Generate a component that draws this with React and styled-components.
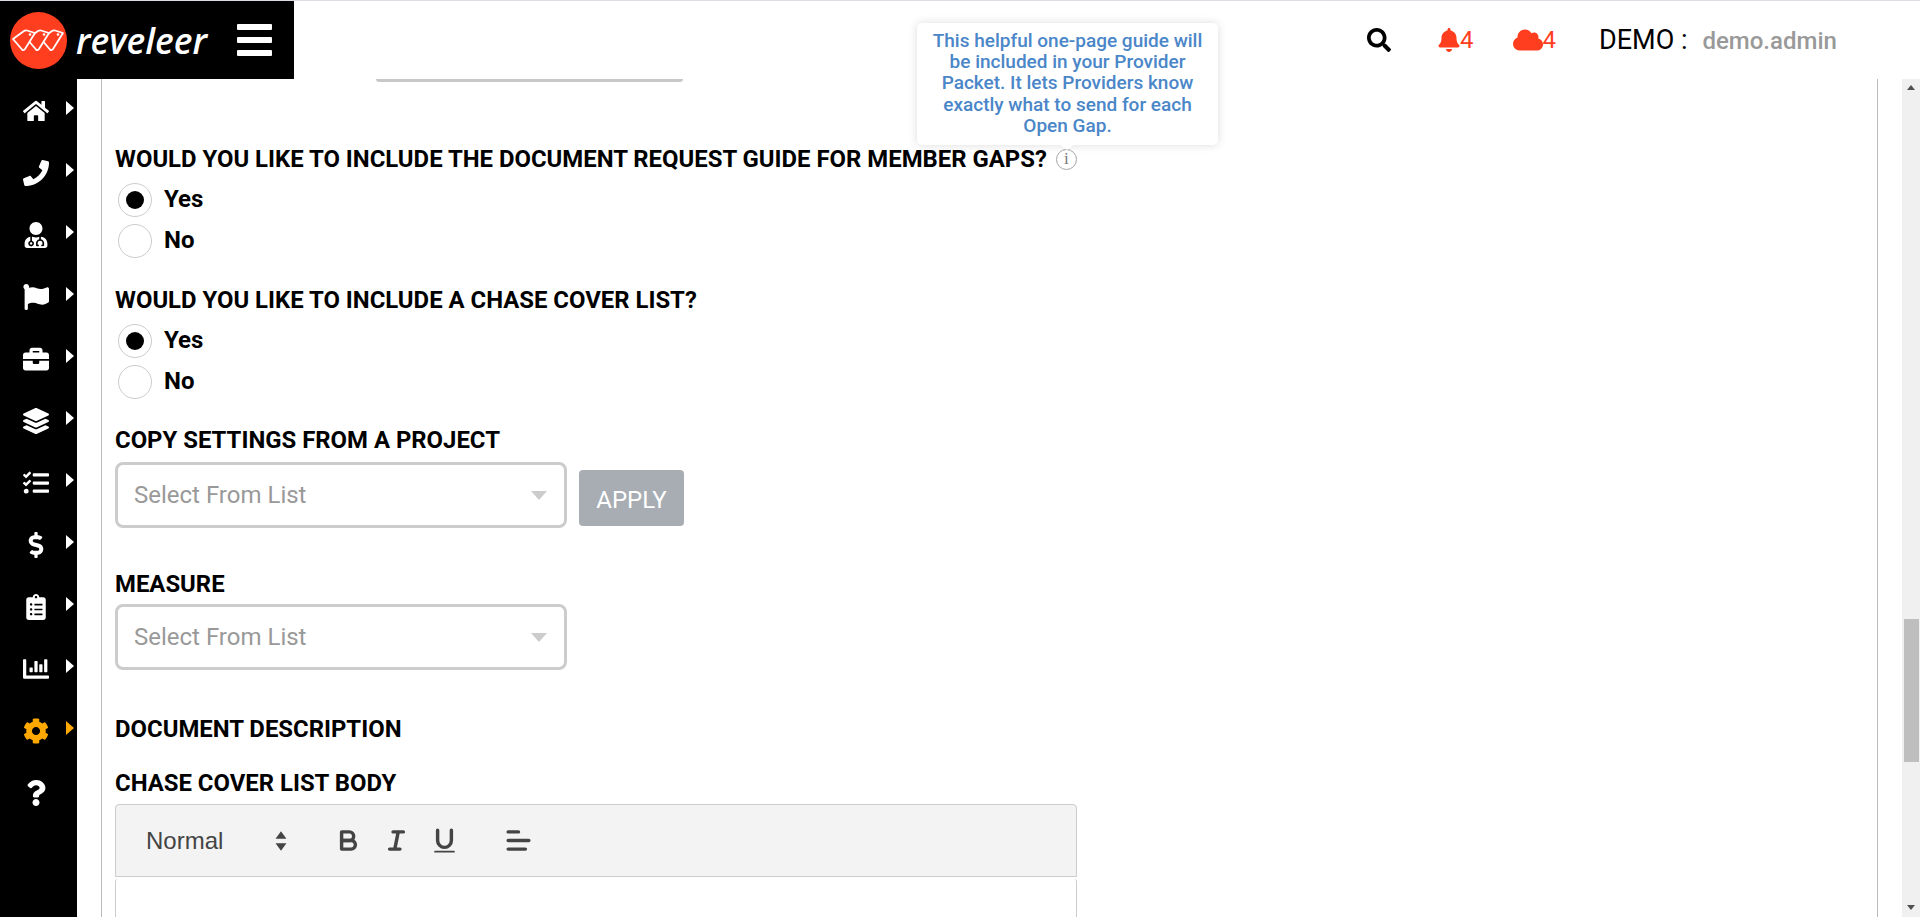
import React from "react";
import styled, { createGlobalStyle } from "styled-components";
import {
  FaHome, FaPhone, FaUserMd, FaFlag, FaBriefcase, FaLayerGroup, FaTasks,
  FaDollarSign, FaClipboardList, FaChartBar, FaCog, FaQuestion, FaSearch, FaBell, FaCloud,
} from "react-icons/fa";

const GlobalStyle = createGlobalStyle`
  html, body { margin: 0; padding: 0; height: 100%; overflow: hidden; background: #fff; }
  body { font-family: Roboto, "Liberation Sans", sans-serif; color: #000; }
`;

const Page = styled.div`
  position: relative;
  width: 1920px;
  height: 917px;
  overflow: hidden;
  display: flex;
  flex-direction: column;
  border-top: 1px solid #dcdce2;
  box-sizing: border-box;
`;

const Header = styled.header`
  display: flex;
  align-items: center;
  height: 78px;
  flex: none;
`;

const Brand = styled.div`
  width: 294px;
  height: 78px;
  background: #000;
  display: flex;
  align-items: center;
  padding-left: 10px;
  box-sizing: border-box;
  flex: none;
`;

const LogoText = styled.span`
  font-family: "Open Sans", sans-serif;
  font-style: italic;
  font-weight: 600;
  font-size: 35.5px;
  color: #fff;
  margin-left: 9px;
  width: 161px;
`;

const Burger = styled.div`
  display: flex;
  flex-direction: column;
  gap: 7px;
  width: 35px;
  span { display: block; height: 6px; background: #fff; border-radius: 1px; }
`;

const HeaderRight = styled.div`
  flex: 1;
  display: flex;
  align-items: center;
  padding-left: 1073px;
  height: 78px;
`;

const SearchIcon = styled(FaSearch)`
  width: 24px;
  height: 24px;
  margin-right: 47px;
`;

const Alert = styled.div`
  display: flex;
  align-items: center;
  color: #ff3d1f;
  font-size: 24px;
  margin-right: ${(p) => p.$gap}px;
`;

const BellIcon = styled(FaBell)`
  width: 22px;
  height: 24px;
`;

const CloudIcon = styled(FaCloud)`
  width: 30px;
  height: 30px;
`;

const User = styled.div`
  font-size: 27px;
  display: flex;
  align-items: baseline;
  white-space: nowrap;
`;

const UserName = styled.span`
  font-size: 24px;
  font-weight: 500;
  color: #999;
  margin-left: 15px;
`;

const Body = styled.div`
  flex: 1;
  display: flex;
  min-height: 0;
`;

const Sidebar = styled.nav`
  width: 77px;
  flex: none;
  background: #000;
  padding-top: 1px;
`;

const NavItem = styled.div`
  height: 62px;
  display: flex;
  align-items: center;
  color: ${(p) => (p.$active ? "#ffa800" : "#fff")};
  svg { width: 26px; height: 26px; }
`;

const NavIcon = styled.div`
  width: 66px;
  display: flex;
  justify-content: center;
  padding-left: 6px;
  box-sizing: border-box;
`;

const NavCaret = styled.div`
  width: 0;
  height: 0;
  border-left: 8px solid currentColor;
  border-top: 7px solid transparent;
  border-bottom: 7px solid transparent;
  margin-top: -6px;
`;

const Main = styled.main`
  flex: 1;
  padding: 0 24px;
  min-width: 0;
`;

const Panel = styled.div`
  height: 100%;
  border-left: 1px solid #bbb;
  border-right: 1px solid #bbb;
  padding-left: 13px;
  overflow: hidden;
`;

const ClippedInput = styled.div`
  width: 307px;
  height: 3px;
  margin-left: 261px;
  background: #c8c8c8;
  border-radius: 0 0 6px 6px;
`;

const Question = styled.div`
  font-size: 23.9px;
  font-weight: 700;
  line-height: 24px;
  display: flex;
  align-items: center;
  white-space: nowrap;
`;

const FirstQuestion = styled(Question)`
  margin-top: 65px;
`;

const RadioGroup = styled.div`
  display: flex;
  flex-direction: column;
  gap: 7px;
  margin: 12px 0 0 3px;
`;

const RadioRow = styled.label`
  display: flex;
  align-items: center;
  height: 34px;
  font-size: 24px;
  font-weight: 700;
`;

const RadioCircle = styled.span`
  width: 34px;
  height: 34px;
  border: 1px solid #ccc;
  border-radius: 50%;
  box-sizing: border-box;
  display: flex;
  align-items: center;
  justify-content: center;
  margin-right: 12px;
  &::after {
    content: "";
    display: ${(p) => (p.$checked ? "block" : "none")};
    width: 18px;
    height: 18px;
    border-radius: 50%;
    background: #000;
  }
`;

const RadioText = styled.span`
  margin-top: -3px;
`;

const Section = styled.div`
  margin-top: ${(p) => p.$top}px;
`;

const FieldRow = styled.div`
  display: flex;
  align-items: flex-start;
  margin-top: ${(p) => p.$top}px;
`;

const Select = styled.div`
  width: 452px;
  height: 66px;
  border: 3px solid #ccc;
  border-radius: 8px;
  box-sizing: border-box;
  display: flex;
  align-items: center;
  justify-content: space-between;
  padding: 0 17px 0 16px;
  font-size: 24px;
  color: #999;
`;

const SelectCaret = styled.span`
  width: 0;
  height: 0;
  border-top: 9px solid #ccc;
  border-left: 8px solid transparent;
  border-right: 8px solid transparent;
`;

const ApplyButton = styled.button`
  width: 105px;
  height: 56px;
  margin: 8px 0 0 12px;
  border: 0;
  border-radius: 4px;
  background: #a7adb2;
  color: #fff;
  font-family: Roboto, sans-serif;
  font-size: 24px;
  padding: 4px 0 0;
`;

const Toolbar = styled.div`
  width: 962px;
  height: 73px;
  margin-top: 9px;
  box-sizing: border-box;
  background: #f3f3f3;
  border: 1px solid #ccc;
  border-radius: 4px 4px 0 0;
  display: flex;
  align-items: center;
  padding-left: 30px;
  color: #444;
`;

const FormatLabel = styled.span`
  font-family: "Liberation Sans", Arial, sans-serif;
  font-size: 24px;
  width: 127px;
  color: #444;
`;

const FormatArrows = styled.svg`
  width: 16px;
  height: 24px;
  margin-right: 44px;
`;

const ToolButton = styled.svg`
  width: 31px;
  height: 31px;
  margin-right: ${(p) => p.$gap}px;
  fill: none;
  stroke: #444;
  stroke-width: 2;
  stroke-linecap: round;
  stroke-linejoin: round;
`;

const Editor = styled.div`
  width: 962px;
  height: 60px;
  margin-top: 2px;
  box-sizing: border-box;
  border: solid #ccc;
  border-width: 0 1px;
  border-radius: 3px 3px 0 0;
`;

const Scrollbar = styled.div`
  width: 18px;
  flex: none;
  background: #f0f0f0;
  display: flex;
  flex-direction: column;
  align-items: center;
`;

const ScrollArrow = styled.span`
  width: 0;
  height: 0;
  margin-top: ${(p) => p.$top}px;
  border-left: 4.5px solid transparent;
  border-right: 4.5px solid transparent;
  ${(p) => (p.$up ? "border-bottom: 5px solid #505050;" : "border-top: 5px solid #505050;")}
`;

const ScrollThumb = styled.div`
  width: 15px;
  height: 143px;
  background: #bebebe;
  margin-top: 529px;
  align-self: flex-end;
  margin-right: 1px;
`;

const Tooltip = styled.div`
  position: absolute;
  left: 917px;
  top: 22px;
  width: 301px;
  height: 122px;
  box-sizing: border-box;
  padding: 7px 10px 0;
  background: #fff;
  border-radius: 5px;
  box-shadow: 0 0 10px rgba(0, 0, 0, 0.14);
  color: #4a86c8;
  font-size: 19px;
  font-weight: 500;
  line-height: 21.2px;
  text-align: center;
  &::after {
    content: "";
    position: absolute;
    left: 144px;
    bottom: -5px;
    border-top: 5px solid #fff;
    border-left: 6px solid transparent;
    border-right: 6px solid transparent;
  }
`;

const InfoIcon = styled.span`
  width: 21px;
  height: 21px;
  margin-left: 9px;
  border: 1.5px solid #a5a5a5;
  border-radius: 50%;
  box-sizing: border-box;
  display: flex;
  align-items: center;
  justify-content: center;
  font-family: "Liberation Serif", serif;
  font-size: 17px;
  font-weight: 400;
  color: #777;
`;

const navItems = [
  [FaHome], [FaPhone], [FaUserMd], [FaFlag], [FaBriefcase], [FaLayerGroup],
  [FaTasks], [FaDollarSign], [FaClipboardList], [FaChartBar], [FaCog, true],
];

function Logo() {
  const band = "M3 27 L14 19 Q15.5 18 17 18.5 L25 21 L15 37 Q13.5 39 12 37.5 Z";
  return (
    <svg width="57" height="57" viewBox="0 0 57 57">
      <circle cx="28.5" cy="28.5" r="28.5" fill="#ff3d1f" />
      <g fill="#ff3d1f" stroke="#fff" strokeWidth="1.8" strokeLinejoin="round">
        <path d={band} transform="translate(28 0)" />
        <path d={band} transform="translate(14 0)" />
        <path d={band} />
      </g>
      <g fill="#fff">
        <circle cx="20" cy="22.5" r="1.3" />
        <circle cx="34" cy="22.5" r="1.3" />
        <circle cx="48" cy="22.5" r="1.3" />
      </g>
    </svg>
  );
}

function Radios({ value }) {
  return (
    <RadioGroup>
      <RadioRow><RadioCircle $checked={value === "Yes"} /><RadioText>Yes</RadioText></RadioRow>
      <RadioRow><RadioCircle $checked={value === "No"} /><RadioText>No</RadioText></RadioRow>
    </RadioGroup>
  );
}

export default function App() {
  return (
    <Page>
      <GlobalStyle />
      <Header>
        <Brand>
          <Logo />
          <LogoText>reveleer</LogoText>
          <Burger><span /><span /><span /></Burger>
        </Brand>
        <HeaderRight>
          <SearchIcon />
          <Alert $gap={39}><BellIcon />4</Alert>
          <Alert $gap={43}><CloudIcon />4</Alert>
          <User>DEMO :<UserName>demo.admin</UserName></User>
        </HeaderRight>
      </Header>
      <Body>
        <Sidebar>
          {navItems.map(([Icon, active], i) => (
            <NavItem key={i} $active={active}>
              <NavIcon><Icon /></NavIcon>
              <NavCaret />
            </NavItem>
          ))}
          <NavItem><NavIcon><FaQuestion /></NavIcon></NavItem>
        </Sidebar>
        <Main>
          <Panel>
            <ClippedInput />
            <FirstQuestion>
              WOULD YOU LIKE TO INCLUDE THE DOCUMENT REQUEST GUIDE FOR MEMBER GAPS?
              <InfoIcon>i</InfoIcon>
            </FirstQuestion>
            <Radios value="Yes" />
            <Section $top={30}><Question>WOULD YOU LIKE TO INCLUDE A CHASE COVER LIST?</Question></Section>
            <Radios value="Yes" />
            <Section $top={29}>
              <Question>COPY SETTINGS FROM A PROJECT</Question>
              <FieldRow $top={10}>
                <Select>Select From List<SelectCaret /></Select>
                <ApplyButton>APPLY</ApplyButton>
              </FieldRow>
            </Section>
            <Section $top={44}>
              <Question>MEASURE</Question>
              <FieldRow $top={8}>
                <Select>Select From List<SelectCaret /></Select>
              </FieldRow>
            </Section>
            <Section $top={47}><Question>DOCUMENT DESCRIPTION</Question></Section>
            <Section $top={30}>
              <Question>CHASE COVER LIST BODY</Question>
              <Toolbar>
                <FormatLabel>Normal</FormatLabel>
                <FormatArrows viewBox="0 0 14 22">
                  <path d="M7 2 L12 9 H2 Z M7 20 L2 13 H12 Z" fill="#444" />
                </FormatArrows>
                <ToolButton viewBox="0 0 18 18" $gap={17}>
                  <path d="M5,4H9.5A2.5,2.5,0,0,1,12,6.5v0A2.5,2.5,0,0,1,9.5,9H5V4Z" />
                  <path d="M5,9h5.5A2.5,2.5,0,0,1,13,11.5v0A2.5,2.5,0,0,1,10.5,14H5V9Z" />
                </ToolButton>
                <ToolButton viewBox="0 0 18 18" $gap={17}>
                  <path d="M7 4H13M5 14H11M8 14L10 4" />
                </ToolButton>
                <ToolButton viewBox="0 0 18 18" $gap={43}>
                  <path d="M5,3V9a4,4,0,0,0,4,4H9a4,4,0,0,0,4-4V3" />
                  <rect x="3" y="15" width="12" height="1" rx=".5" fill="#444" stroke="none" />
                </ToolButton>
                <ToolButton viewBox="0 0 18 18" $gap={17}>
                  <path d="M3 9H15M3 14H13M3 4H9" />
                </ToolButton>
              </Toolbar>
              <Editor />
            </Section>
          </Panel>
        </Main>
        <Scrollbar>
          <ScrollArrow $up $top={6} />
          <ScrollThumb />
          <ScrollArrow $top={143} />
        </Scrollbar>
      </Body>
      <Tooltip>This helpful one-page guide will be included in your Provider Packet. It lets Providers know exactly what to send for each Open Gap.</Tooltip>
    </Page>
  );
}
